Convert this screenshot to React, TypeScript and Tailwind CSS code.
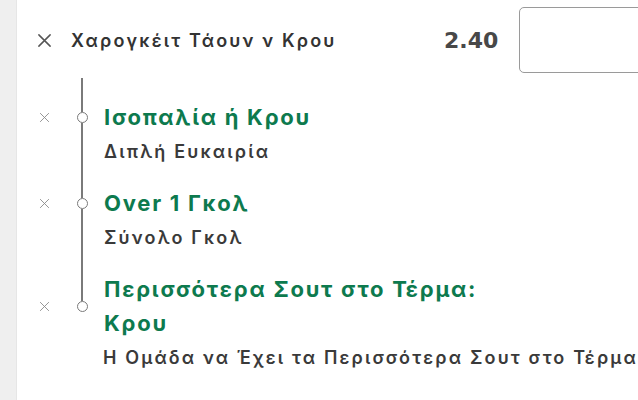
import React from 'react';

type Leg = {
  title: string;
  market: string;
  first?: boolean;
  last?: boolean;
};

const legs: Leg[] = [
  { title: 'Ισοπαλία ή Κρου', market: 'Διπλή Ευκαιρία', first: true },
  { title: 'Over 1 Γκολ', market: 'Σύνολο Γκολ' },
  { title: 'Περισσότερα Σουτ στο Τέρμα: Κρου', market: 'Η Ομάδα να Έχει τα Περισσότερα Σουτ στο Τέρμα', last: true },
];

const CloseIcon = ({ size, stroke, color }: { size: number; stroke: number; color: string }) => (
  <svg width={size} height={size} viewBox="0 0 16 16" fill="none">
    <path d="M2 2L14 14M14 2L2 14" stroke={color} strokeWidth={stroke} strokeLinecap="round" />
  </svg>
);

const LegRow = ({ title, market, first, last }: Leg) => {
  return (
    <div className="flex flex-col">
      {first && (
        <div className="flex h-[22px]">
          <div className="w-[54px]" />
          <div className="w-[22px] flex justify-center">
            <div className="w-[1.5px] h-full bg-[#7a7a7a]" />
          </div>
        </div>
      )}
      <div className="flex items-stretch">
        <div className="w-[54px] flex items-center justify-center">
          <CloseIcon size={11} stroke={1.3} color="#8a8a8a" />
        </div>
        <div className="w-[22px] flex flex-col items-center">
          <div className="w-[1.5px] flex-1 bg-[#7a7a7a]" />
          <div className="size-[11px] shrink-0 rounded-full border-[1.5px] border-[#7a7a7a] bg-white" />
          <div className={last ? 'w-[1.5px] flex-1' : 'w-[1.5px] flex-1 bg-[#7a7a7a]'} />
        </div>
        <div className="ml-[11px] w-[400px] text-[22px] leading-[34px] font-bold tracking-[0.08em] text-[#0d7a4e]">{title}</div>
      </div>
      <div className="flex">
        <div className="w-[54px]" />
        <div className="w-[22px] flex justify-center">
          <div className={last ? 'w-[1.5px] h-full' : 'w-[1.5px] h-full bg-[#7a7a7a]'} />
        </div>
        <div className="ml-[11px] whitespace-nowrap text-[18px] leading-[35px] font-semibold tracking-[0.12em] text-[#3a3a3a]">{market}</div>
      </div>
      {!last && (
        <div className="flex h-[17px]">
          <div className="w-[54px]" />
          <div className="w-[22px] flex justify-center">
            <div className="w-[1.5px] h-full bg-[#7a7a7a]" />
          </div>
        </div>
      )}
    </div>
  );
};

export default function App() {
  return (
    <div className="flex w-[638px] h-[400px] overflow-hidden bg-white font-['Inter',sans-serif]">
      <div className="w-[17px] shrink-0 bg-[#efefef] border-r border-[#e6e6e6]" />
      <div className="flex flex-col flex-1 min-w-0">
        <div className="flex items-center pt-[7px]">
          <div className="w-[54px] shrink-0 flex justify-center">
            <CloseIcon size={15} stroke={1.6} color="#555" />
          </div>
          <div className="w-[373px] shrink-0 whitespace-nowrap text-[18px] font-semibold tracking-[0.12em] text-[#333]">Χαρογκέιτ Τάουν ν Κρου</div>
          <div className="w-[75px] shrink-0 font-['DejaVu_Sans',sans-serif] text-[22px] font-bold text-[#484848]">2.40</div>
          <div className="w-[140px] h-[66px] shrink-0 rounded-[5px] border border-[#9a9a9a] bg-white" />
        </div>
        <div className="mt-[5px]">
          {legs.map((leg) => (
            <LegRow key={leg.title} {...leg} />
          ))}
        </div>
      </div>
    </div>
  );
}
